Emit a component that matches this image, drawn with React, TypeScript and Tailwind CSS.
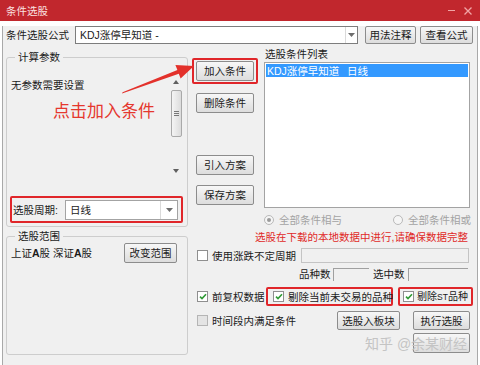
import React from 'react';

const FONT = "font-['Liberation_Sans','Noto_Sans_CJK_SC',sans-serif]";

function Btn({ children, className = '' }: { children?: React.ReactNode; className?: string }) {
  return (
    <div
      className={`h-[20px] flex items-center justify-center border border-[#8c8c8c] rounded-[2px] bg-linear-to-b from-[#f7f7f7] to-[#dddddd] text-[10.5px] leading-[12px] text-[#1b1b1b] ${className}`}
    >
      {children}
    </div>
  );
}

function Check({ checked = false, dim = false }: { checked?: boolean; dim?: boolean }) {
  return (
    <div
      className={`w-[11px] h-[11px] shrink-0 border flex items-center justify-center ${
        dim ? 'border-[#b5b5b5] bg-[#e4e4e4]' : 'border-[#8f8f8f] bg-white'
      }`}
    >
      {checked && (
        <svg width="8" height="7" viewBox="0 0 8 7">
          <path d="M1 3.6 L3 5.6 L7 1.2" fill="none" stroke="#2f9a35" strokeWidth="1.6" />
        </svg>
      )}
    </div>
  );
}

function Radio({ checked = false, label }: { checked?: boolean; label: string }) {
  return (
    <div className="flex items-center gap-[5px]">
      <div className="w-[10px] h-[10px] rounded-full border border-[#b9b9b9] bg-[#f5f5f5] flex items-center justify-center">
        {checked && <div className="w-[4px] h-[4px] rounded-full bg-[#9a9a9a]" />}
      </div>
      <span className="text-[10.5px] leading-[14px] text-[#a3a3a3]">{label}</span>
    </div>
  );
}

function DropArrow() {
  return (
    <svg width="7" height="4" viewBox="0 0 7 4">
      <path d="M0 0 H7 L3.5 4 Z" fill="#6d6d6d" />
    </svg>
  );
}

export default function App() {
  return (
    <div className={`w-[480px] h-[365px] bg-white relative overflow-hidden ${FONT}`}>
      {/* title bar */}
      <div className="h-[21px] bg-[#c1272d] flex items-center justify-between pl-[6px] pr-[8px]">
        <span className="text-[10.5px] leading-[12px] text-[#fbe1e1]">条件选股</span>
        <div className="flex items-center gap-[9px]">
          <div className="w-[7px] h-[1.5px] bg-[#f1a5a5]" />
          <svg width="8" height="8" viewBox="0 0 8 8">
            <path d="M0.5 0.5 L7.5 7.5 M7.5 0.5 L0.5 7.5" stroke="#f1a5a5" strokeWidth="1.3" />
          </svg>
        </div>
      </div>

      <div className="mx-[2px] h-[342px] bg-[#f0f0f0] border-x border-b border-[#a9a9a9] text-[#1b1b1b]">
        {/* formula row */}
        <div className="mt-[5px] h-[18px] pl-[3px] flex items-center">
          <span className="w-[69px] text-[10.5px] leading-[12px]">条件选股公式</span>
          <div className="w-[283px] h-[18px] border border-[#7d7d7d] bg-white flex items-center">
            <span className="flex-1 pl-[4px] text-[10.5px] leading-[12px]">KDJ涨停早知道 -</span>
            <div className="w-[12px] h-full border-l border-[#dadada] flex items-center justify-center">
              <DropArrow />
            </div>
          </div>
          <Btn className="ml-[7px] w-[51px] !h-[18px]">用法注释</Btn>
          <Btn className="ml-[4px] w-[53px] !h-[18px]">查看公式</Btn>
        </div>

        <div className="flex">
          {/* left column */}
          <div className="pl-[3px] pt-[7px] w-[185px] flex flex-col">
            <fieldset className="h-[176px] border border-[#cdcdcd] rounded-[3px] px-[4px]">
              <legend className="ml-[4px] px-[3px] text-[10.5px] leading-[12px]">计算参数</legend>
              <div className="flex h-[131px]">
                <div className="flex-1 flex flex-col">
                  <span className="mt-[15px] text-[10.5px] leading-[14px]">无参数需要设置</span>
                  <span className="mt-[10px] ml-[42px] text-[17px] leading-[20px] text-[#e5372e]">点击加入条件</span>
                </div>
                <div className="w-[12px] mt-[13px] mr-[1px] h-[102px] flex flex-col items-center">
                  <svg className="mt-[4px]" width="6" height="4" viewBox="0 0 6 4">
                    <path d="M0 4 H6 L3 0 Z" fill="#5f5f5f" />
                  </svg>
                  <div className="mt-[6px] w-[11px] h-[47px] rounded-[2px] border border-[#a9a9a9] bg-linear-to-r from-[#f4f4f4] to-[#dcdcdc] flex flex-col items-center justify-center gap-[1px]">
                    <div className="w-[5px] h-px bg-[#777]" />
                    <div className="w-[5px] h-px bg-[#777]" />
                    <div className="w-[5px] h-px bg-[#777]" />
                  </div>
                  <svg className="mt-auto mb-[5px]" width="6" height="4" viewBox="0 0 6 4">
                    <path d="M0 0 H6 L3 4 Z" fill="#5f5f5f" />
                  </svg>
                </div>
              </div>
              <div className="mt-[2px] -ml-[1px] w-[173px] h-[27px] border-2 border-[#e0262a] rounded-[2px] flex items-center px-[1px]">
                <span className="w-[52px] text-[10.5px] leading-[12px]">选股周期:</span>
                <div className="w-[113px] h-[20px] border border-[#a3a3a3] bg-white flex items-center">
                  <span className="flex-1 pl-[4px] text-[10.5px] leading-[12px]">日线</span>
                  <div className="w-[17px] h-full border-l border-[#dadada] flex items-center justify-center">
                    <DropArrow />
                  </div>
                </div>
              </div>
            </fieldset>

            <fieldset className="mt-[3px] h-[125px] border border-[#cdcdcd] rounded-[3px] px-[4px]">
              <legend className="ml-[4px] px-[3px] text-[10.5px] leading-[12px]">选股范围</legend>
              <div className="mt-[1px] h-[20px] flex items-center justify-between pr-[6px]">
                <span className="text-[10.5px] leading-[12px]">
                  上证<b className="font-bold">A</b>股 深证<b className="font-bold">A</b>股
                </span>
                <Btn className="w-[53px]">改变范围</Btn>
              </div>
            </fieldset>
          </div>

          {/* right block */}
          <div className="flex-1 flex flex-col">
            <div className="flex h-[164px]">
              <div className="w-[74px] pt-[14px] pl-[4px] flex flex-col">
                <div className="w-[66px] h-[26px] border-2 border-[#e0262a] rounded-[2px] py-[1px] px-[2px]">
                  <Btn className="w-[58px]">加入条件</Btn>
                </div>
                <Btn className="ml-[4px] mt-[9px] w-[58px]">删除条件</Btn>
                <Btn className="ml-[4px] mt-[42px] w-[58px]">引入方案</Btn>
                <Btn className="ml-[4px] mt-[10px] w-[58px]">保存方案</Btn>
              </div>
              <div className="pt-[4px] pl-[2px] flex flex-col">
                <span className="pl-[1px] text-[10.5px] leading-[12px]">选股条件列表</span>
                <div className="mt-[2px] w-[206px] h-[146px] border border-[#a3a3a3] bg-white p-[1px]">
                  <div className="h-[13px] bg-[#3399ff] flex items-center text-white text-[10.5px] leading-[12px] pl-[1px]">
                    <span className="w-[80px]">KDJ涨停早知道</span>
                    <span>日线</span>
                  </div>
                </div>
              </div>
            </div>

            <div className="mt-[5px] h-[14px] pl-[76px] pr-[6px] flex items-center justify-between">
              <Radio checked label="全部条件相与" />
              <Radio label="全部条件相或" />
            </div>

            <div className="mt-[3px] h-[14px] pr-[9px] text-right text-[10.5px] leading-[14px] text-[#e02a28]">
              选股在下载的本地数据中进行,请确保数据完整
            </div>

            <div className="mt-[4px] h-[15px] pl-[9px] flex items-center">
              <Check />
              <span className="ml-[4px] w-[89px] text-[10.5px] leading-[12px]">使用涨跌不定周期</span>
              <div className="w-[168px] h-[15px] border border-[#c4c4c4] bg-[#f0f0f0]" />
            </div>

            <div className="mt-[4px] h-[14px] pl-[111px] flex items-center">
              <span className="w-[34px] text-[10.5px] leading-[12px]">品种数</span>
              <div className="w-[36px] h-[13px] border-t border-l border-[#a0a0a0] border-b-white border-r-white" />
              <span className="ml-[4px] w-[35px] text-[10.5px] leading-[12px]">选中数</span>
              <div className="w-[60px] h-[13px] border-t border-l border-[#a0a0a0] border-b-white border-r-white" />
            </div>

            <div className="mt-[6px] h-[19px] pl-[9px] flex items-center">
              <Check checked />
              <span className="ml-[4px] w-[54px] text-[10.5px] leading-[12px]">前复权数据</span>
              <div className="w-[127px] h-[19px] border-2 border-[#e0262a] rounded-[2px] flex items-center pl-[5px]">
                <Check checked />
                <span className="ml-[4px] text-[10.5px] leading-[12px] whitespace-nowrap">剔除当前未交易的品种</span>
              </div>
              <div className="ml-[5px] w-[75px] h-[19px] border-2 border-[#e0262a] rounded-[2px] flex items-center pl-[3px]">
                <Check checked />
                <span className="ml-[3px] text-[10px] leading-[12px] whitespace-nowrap">
                  剔除<span className="text-[8.5px]">ST</span>品种
                </span>
              </div>
            </div>

            <div className="mt-[5px] h-[19px] pl-[9px] pr-[7px] flex items-center">
              <Check dim />
              <span className="ml-[4px] text-[10.5px] leading-[12px]">时间段内满足条件</span>
              <Btn className="ml-auto w-[63px] !h-[19px]">选股入板块</Btn>
              <Btn className="ml-[13px] w-[57px] !h-[19px]">执行选股</Btn>
            </div>

            <div className="mt-[3px] pr-[7px] flex justify-end">
              <Btn className="w-[57px]" />
            </div>
          </div>
        </div>
      </div>

      {/* annotation arrow */}
      <svg className="absolute left-0 top-0 pointer-events-none" width="480" height="365">
        <polygon
          points="122,93.6 178.8,73.7 180.6,78.6 194,66 175.4,65 177.4,69.9 122.6,92.2"
          fill="#e3312b"
        />
      </svg>

      {/* watermark */}
      <div className="absolute left-[365px] top-[335px] text-[14px] leading-[18px] text-[#c4c4c4] whitespace-nowrap">
        知乎 @余某财经
      </div>
    </div>
  );
}
